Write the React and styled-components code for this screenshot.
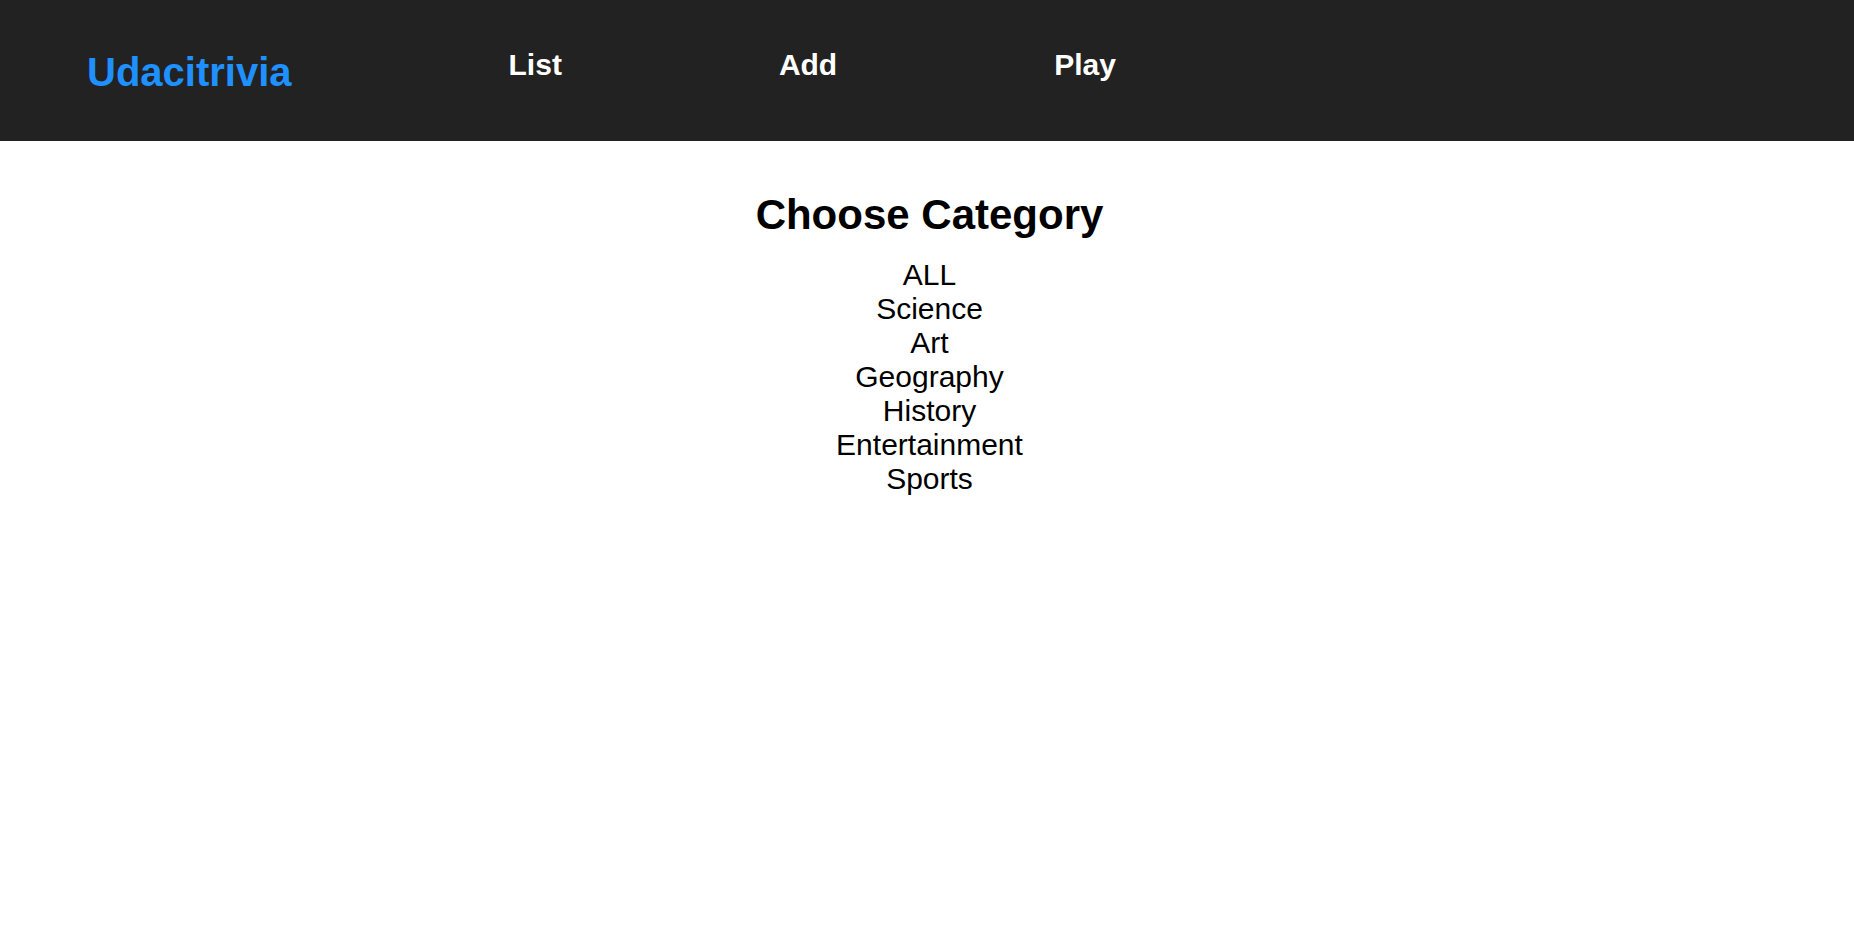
import React from "react";
import styled, { createGlobalStyle } from "styled-components";

const GlobalStyle = createGlobalStyle`
  body {
    margin: 0;
    font-family: "Liberation Sans", Arial, sans-serif;
    background: #fff;
  }
`;

const Header = styled.header`
  box-sizing: border-box;
  height: 141px;
  background-color: #222;
  display: flex;
  align-items: flex-start;
  gap: 217px;
  padding: 48px 0 0 87px;
`;

const Logo = styled.h1`
  margin: 2px 0 0;
  font-size: 40px;
  font-weight: bold;
  color: #1e90ff;
`;

const NavItem = styled.h2`
  margin: 0;
  font-size: 30px;
  font-weight: bold;
  color: #fff;
  cursor: pointer;
`;

const Main = styled.main`
  display: flex;
  flex-direction: column;
  align-items: center;
  padding: 50px 0 0 5px;
`;

const Title = styled.h2`
  margin: 0 0 19px;
  font-size: 42px;
  font-weight: bold;
  color: #000;
`;

const CategoryList = styled.div`
  display: flex;
  flex-direction: column;
  align-items: center;
`;

const Category = styled.div`
  font-size: 30px;
  color: #000;
  cursor: pointer;
`;

const categories = [
  "ALL",
  "Science",
  "Art",
  "Geography",
  "History",
  "Entertainment",
  "Sports",
];

const App = () => {
  return (
    <>
      <GlobalStyle />
      <Header>
        <Logo>Udacitrivia</Logo>
        <NavItem>List</NavItem>
        <NavItem>Add</NavItem>
        <NavItem>Play</NavItem>
      </Header>
      <Main>
        <Title>Choose Category</Title>
        <CategoryList>
          {categories.map((category) => (
            <Category key={category}>{category}</Category>
          ))}
        </CategoryList>
      </Main>
    </>
  );
};

export default App;
